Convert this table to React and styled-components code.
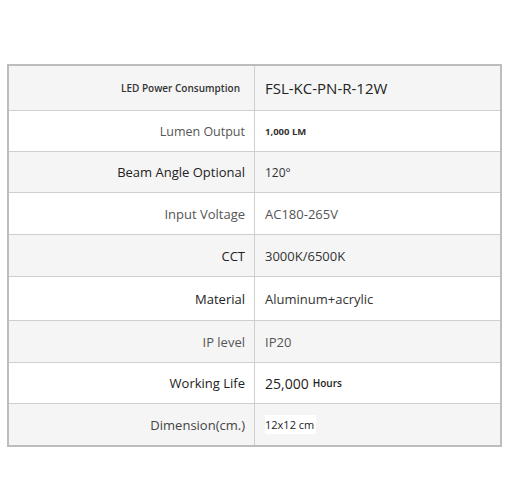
import React from "react";
import styled, { createGlobalStyle } from "styled-components";

const Global = createGlobalStyle`
  html, body { margin: 0; padding: 0; background: #ffffff; }
  body { font-family: "Open Sans", "DejaVu Sans", sans-serif; }
`;

const Page = styled.div`
  width: 510px;
  height: 488px;
  padding: 64px 8px 0 7px;
  box-sizing: border-box;
`;

const Table = styled.div`
  width: 495px;
  border: 2px solid #bdbdbd;
  box-sizing: border-box;
  display: flex;
  flex-direction: column;
`;

const Row = styled.div`
  display: grid;
  grid-template-columns: 246px 1fr;
  height: ${(p) => p.$h}px;
  background: ${(p) => (p.$shade ? "#f5f5f5" : "#ffffff")};
  border-bottom: ${(p) => (p.$last ? "none" : "1px solid #cfcfcf")};
  box-sizing: border-box;
`;

const Label = styled.div`
  display: flex;
  align-items: center;
  justify-content: flex-end;
  padding-right: ${(p) => p.$pad || 9}px;
  border-right: 1px solid #cfcfcf;
  font-size: ${(p) => p.$size || 13}px;
  font-weight: ${(p) => p.$weight || 400};
  color: ${(p) => p.$color || "#555"};
  white-space: nowrap;
`;

const Value = styled.div`
  display: flex;
  align-items: center;
  padding-left: 10px;
  font-size: ${(p) => p.$size || 13}px;
  font-weight: ${(p) => p.$weight || 400};
  color: ${(p) => p.$color || "#555"};
  white-space: nowrap;
`;

const Small = styled.span`
  font-size: ${(p) => p.$size || 11}px;
  font-weight: 600;
  margin-left: 4px;
`;

const Chip = styled.span`
  background: #ffffff;
  padding: 2px 2px 2px 0;
`;

const rows = [
  { h: 46, label: "LED Power Consumption", ls: 10, lw: 600, lc: "#333", pad: 14, value: "FSL-KC-PN-R-12W", vs: 15, vw: 400, vc: "#222" },
  { h: 41, label: "Lumen Output", ls: 12.5, lw: 400, lc: "#555", value: "1,000 LM", vs: 9.5, vw: 700, vc: "#333" },
  { h: 41, label: "Beam Angle Optional", ls: 13, lw: 500, lc: "#222", value: "120°", vs: 12, vw: 400, vc: "#333" },
  { h: 42, label: "Input Voltage", ls: 13, lw: 400, lc: "#555", value: "AC180-265V", vs: 13, vw: 400, vc: "#555" },
  { h: 42, label: "CCT", ls: 13, lw: 500, lc: "#222", value: "3000K/6500K", vs: 13, vw: 400, vc: "#333" },
  { h: 44, label: "Material", ls: 13, lw: 500, lc: "#222", value: "Aluminum+acrylic", vs: 13, vw: 400, vc: "#333" },
  { h: 42, label: "IP level", ls: 13, lw: 400, lc: "#555", value: "IP20", vs: 13, vw: 400, vc: "#555" },
  { h: 41, label: "Working Life", ls: 13, lw: 500, lc: "#222", value: "hours", vs: 14, vw: 400, vc: "#222" },
  { h: 42, label: "Dimension(cm.)", ls: 13, lw: 400, lc: "#444", value: "dim", vs: 11, vw: 400, vc: "#222" },
];

export default function App() {
  return (
    <>
      <Global />
      <Page>
        <Table>
          {rows.map((r, i) => (
            <Row key={r.label} $h={r.h - (i === 0 || i === rows.length - 1 ? 1 : 0)} $shade={i % 2 === 0} $last={i === rows.length - 1}>
              <Label $size={r.ls} $weight={r.lw} $color={r.lc} $pad={r.pad}>{r.label}</Label>
              <Value $size={r.vs} $weight={r.vw} $color={r.vc}>
                {r.value === "hours" ? (
                  <>25,000<Small $size={10}>Hours</Small></>
                ) : r.value === "dim" ? (
                  <Chip>12x12 cm</Chip>
                ) : (
                  r.value
                )}
              </Value>
            </Row>
          ))}
        </Table>
      </Page>
    </>
  );
}
